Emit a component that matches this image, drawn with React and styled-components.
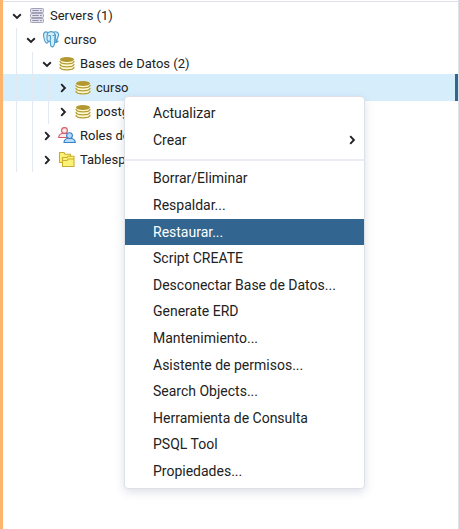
import React from "react";
import styled, { createGlobalStyle, css } from "styled-components";

const Global = createGlobalStyle`
  * { box-sizing: border-box; }
  body { margin: 0; background: #fff; overflow: hidden; }
`;

const Panel = styled.main`
  position: relative;
  width: 459px;
  height: 529px;
  border-left: 3px solid #fdb46c;
  border-right: 1px solid #dde0e6;
  background: #fff;
  color: #222;
  font: 14px/24px Roboto, sans-serif;
  overflow: hidden;
`;

const Tree = styled.div`
  margin-top: 1px;
  padding-top: 2px;
  border-top: 1px solid #dde0e6;
  font-size: 13px;
`;

const Row = styled.div`
  display: flex;
  height: 24px;
  padding-left: 5px;
  white-space: nowrap;
  ${(p) => p.$selected && css`
    height: 27px;
    margin: -2px 0 -1px;
    padding-top: 2px;
    padding-bottom: 1px;
    background: #d6eefc;
    border-right: 3px solid #326690;
  `}
`;

const Guide = styled.span`
  flex: none;
  width: 16px;
  height: 24px;
  padding-left: 8px;
  &::before {
    content: "";
    display: block;
    width: 1px;
    height: 100%;
    background: #e4e8f1;
  }
`;

const Toggle = styled.span`
  display: flex;
  flex: none;
  align-items: center;
  width: ${(p) => (p.$nested ? 17 : 19)}px;
  height: 24px;
  padding-left: ${(p) => (p.$nested ? 2 : 4)}px;
`;

const NodeIcon = styled.svg`
  flex: none;
  width: 20px;
  height: 20px;
  margin: 2px 1px 0 0;
`;

const Label = styled.span`
  margin-left: 2px;
`;

const Menu = styled.div`
  position: absolute;
  left: 121px;
  top: 96px;
  width: 241px;
  height: 393px;
  padding-top: 3.3px;
  border: 1px solid #dde0e6;
  border-radius: 4px;
  background: #fff;
  box-shadow: 0 3px 10px rgba(80, 95, 140, 0.2);
`;

const MenuItem = styled.div`
  display: flex;
  align-items: center;
  justify-content: space-between;
  height: 26.6px;
  padding: 0 7px 0.6px 28px;
  background: ${(p) => (p.$active ? "#326690" : "transparent")};
  color: ${(p) => (p.$active ? "#fff" : "#222")};
`;

const Separator = styled.div`
  height: 2px;
  margin: 5.5px 0 4.4px;
  background: #ebecf3;
`;

const Chevron = ({ open }) => (
  <svg width="10" height="10" viewBox="0 0 10 10" fill="none" stroke="#222" strokeWidth="1.9">
    <path d={open ? "M1.2 3.2 5 6.9 8.8 3.2" : "M3.2 1.2 6.9 5 3.2 8.8"} />
  </svg>
);

const Disks = () => (
  <g>
    <path d="M3.2 6v8.200c1 2.900 12.600 2.900 13.600 0V6Z" fill="#fffbd2" />
    {[7.4, 10.4, 13.4].map((y) => (
      <path
        key={y}
        d="M3 0c.5 3.200 13.500 3.200 14 0"
        transform={`translate(0 ${y})`}
        fill="none"
        stroke="#b69d3a"
        strokeWidth="1.3"
        strokeLinecap="round"
      />
    ))}
    <ellipse cx="10" cy="5.5" rx="7" ry="2.6" fill="#b2982f" />
  </g>
);

const ServerRack = () => (
  <g stroke="#a3a0b8" fill="#e2e2ec" strokeWidth="1">
    {[2.5, 7.5, 12.5].map((y) => (
      <g key={y}>
        <rect x="3.5" y={y} width="13" height="4" rx="1" />
        <path d="M5.300 2h6.500M13 2h1.800" stroke="#918eaa" transform={`translate(0 ${y})`} />
      </g>
    ))}
  </g>
);

const Elephant = () => (
  <g transform="translate(0 .5)" fill="#d3edfa" stroke="#4c9ac6" strokeWidth="1.1" strokeLinejoin="round" strokeLinecap="round">
    <path d="M6.800 1.900C3.800.5 2.200 2.400 2.600 5.500c.4 2.700 1.300 6.400 2.900 7.100 1.100.3 1.700-1.200 2.400-2" />
    <path d="M12.400 1.700c3.300-1.400 5.500.3 5.100 3.200-.3 2.100-1.500 4.200-2.800 5.800l2.400-.1c-.8 1.200-1.900 1.500-3.500 1.300" />
    <path d="M6.800 2.500c1.500-1.800 5-1.900 6.500 0 1.400 1.800.9 4.300.5 7.600-.3 3-.3 6.100-2.300 6.300-2.300.2-1.900-2.800-2.100-5.200-2.800 0-3.800-1.400-3.300-3.900-.2-1.700-.1-3.500.7-4.800Z" />
    <path d="M7.700 5.200c1.400-.7 2.100.2 1.800 1.700L9.100 11M12 5h.7M14.200 4c.5 1.600 0 3.500-.2 5.500" fill="none" />
  </g>
);

const Roles = () => (
  <g strokeWidth="1.1">
    <g fill="#fbeaec" stroke="#d35a64">
      <path d="M1.700 11.500c.1-2.700 1.900-3.700 4-4.200h3.800c2 .5 3.700 1.500 3.800 4.200Z" />
      <circle cx="7.500" cy="4.500" r="2.900" />
    </g>
    <g fill="#b8dcf8" stroke="#397fc4">
      <path d="M7 16.500c.1-2.700 1.900-3.700 4-4.200h3.200c2 .5 4 1.500 4.100 4.200Z" />
      <circle cx="12.500" cy="9.600" r="2.900" />
    </g>
  </g>
);

const Folders = () => (
  <g fill="#fbf277" stroke="#ccae2d" strokeWidth="1.1" strokeLinejoin="round">
    <path d="M2.500 12.500v-10h4.500l1 1.700h5.500v8.300Z" />
    <path d="M5.500 16.500V7.500h4.500l1-1.200h6v10.200Z" />
    <path d="M5.500 10.500h4.500l1-1.500h6" fill="none" />
  </g>
);

const icons = { disks: Disks, rack: ServerRack, elephant: Elephant, roles: Roles, folders: Folders };

const nodes = [
  { depth: 0, open: true, icon: "rack", label: "Servers (1)" },
  { depth: 1, open: true, icon: "elephant", label: "curso" },
  { depth: 2, open: true, icon: "disks", label: "Bases de Datos (2)" },
  { depth: 3, icon: "disks", label: "curso", selected: true },
  { depth: 3, icon: "disks", label: "postgres" },
  { depth: 2, icon: "roles", label: "Roles de" },
  { depth: 2, icon: "folders", label: "Tablespaces" },
];

const actions = [
  "Borrar/Eliminar", "Respaldar...", "Restaurar...", "Script CREATE",
  "Desconectar Base de Datos...", "Generate ERD", "Mantenimiento...",
  "Asistente de permisos...", "Search Objects...", "Herramienta de Consulta",
  "PSQL Tool", "Propiedades...",
];

export default function App() {
  return (
    <Panel>
      <Global />
      <Tree>
        {nodes.map((n, i) => {
          const Icon = icons[n.icon];
          return (
            <Row key={i} $selected={n.selected}>
              {Array.from({ length: n.depth }, (_, d) => <Guide key={d} />)}
              <Toggle $nested={n.depth > 0}><Chevron open={n.open} /></Toggle>
              <NodeIcon viewBox="0 0 20 20"><Icon /></NodeIcon>
              <Label>{n.label}</Label>
            </Row>
          );
        })}
      </Tree>
      <Menu>
        <MenuItem>Actualizar</MenuItem>
        <MenuItem>Crear<Chevron /></MenuItem>
        <Separator />
        {actions.map((a) => (
          <MenuItem key={a} $active={a === "Restaurar..."}>{a}</MenuItem>
        ))}
      </Menu>
    </Panel>
  );
}
